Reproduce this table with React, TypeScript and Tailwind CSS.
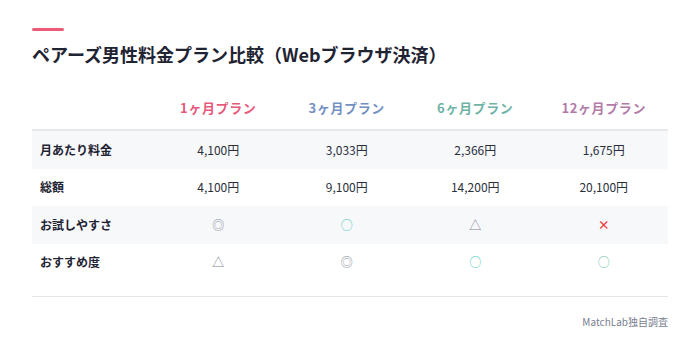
import React from "react";

const font = { fontFamily: '"Noto Sans CJK JP", "Noto Sans", sans-serif' };

const headers = [
  { t: "1ヶ月プラン", c: "text-[#e8587a]" },
  { t: "3ヶ月プラン", c: "text-[#7390c2]" },
  { t: "6ヶ月プラン", c: "text-[#6fb3a6]" },
  { t: "12ヶ月プラン", c: "text-[#b27ba8]" },
];

type Cell = string | { s: string; c: string };

const rows: { label: string; bg: boolean; cells: Cell[] }[] = [
  { label: "月あたり料金", bg: true, cells: ["4,100円", "3,033円", "2,366円", "1,675円"] },
  { label: "総額", bg: false, cells: ["4,100円", "9,100円", "14,200円", "20,100円"] },
  {
    label: "お試しやすさ",
    bg: true,
    cells: [
      { s: "◎", c: "text-[#8a8f9c]" },
      { s: "○", c: "text-[#4fc9b8]" },
      { s: "△", c: "text-[#7c8394]" },
      { s: "×", c: "text-[#ef3b3b] font-bold" },
    ],
  },
  {
    label: "おすすめ度",
    bg: false,
    cells: [
      { s: "△", c: "text-[#7c8394]" },
      { s: "◎", c: "text-[#8a8f9c]" },
      { s: "○", c: "text-[#4fc9b8]" },
      { s: "○", c: "text-[#6cbfa6]" },
    ],
  },
];

export default function App() {
  return (
    <div className="w-[700px] h-[359px] bg-white px-8 pt-[28px]" style={font}>
      <div className="w-8 h-[3px] bg-[#ec5a78] rounded-full" />
      <h1 className="mt-[10px] text-[18px] leading-[26px] font-bold text-[#1f2433]">
        ペアーズ男性料金プラン比較（Webブラウザ決済）
      </h1>
      <div className="mt-[20px] border-b border-[#e3e5ea] pb-[15px]">
        <div className="grid grid-cols-[122px_1fr_1fr_1fr_1fr] h-[44px] items-center border-b-2 border-[#e6e8ec]">
          <div />
          {headers.map((h) => (
            <div key={h.t} className={`text-center text-[13px] font-bold tracking-[0.6px] ${h.c}`}>
              {h.t}
            </div>
          ))}
        </div>
        {rows.map((r) => (
          <div
            key={r.label}
            className={`grid grid-cols-[122px_1fr_1fr_1fr_1fr] h-[37.5px] items-center ${r.bg ? "bg-[#f7f8fa]" : "bg-white"}`}
          >
            <div className="pl-2 text-[12px] font-bold text-[#1f2433]">{r.label}</div>
            {r.cells.map((c, i) =>
              typeof c === "string" ? (
                <div key={i} className="text-center text-[12px] text-[#2a2f3a]">
                  {c}
                </div>
              ) : (
                <div key={i} className={`text-center text-[12px] ${c.c}`}>
                  {c.s}
                </div>
              )
            )}
          </div>
        ))}
      </div>
      <div className="mt-[17px] text-right text-[10px] text-[#7a8090]">MatchLab独自調査</div>
    </div>
  );
}
